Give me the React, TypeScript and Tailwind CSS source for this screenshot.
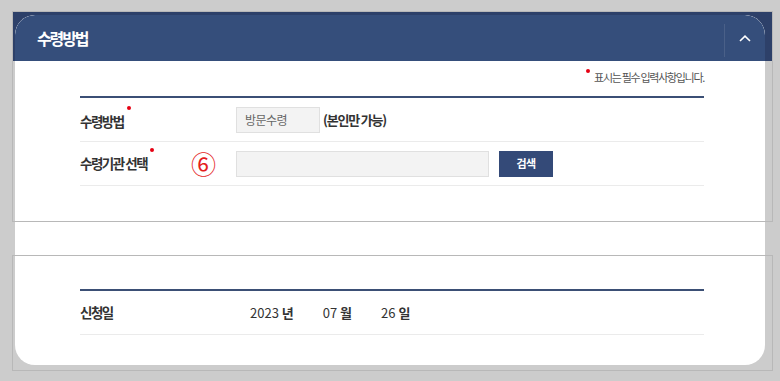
const font = { fontFamily: '"Noto Sans CJK KR", "Noto Sans", sans-serif' };

function RequiredLabel({ text }: { text: string }) {
  return (
    <span className="relative text-[13.5px] font-bold tracking-[-1.5px] text-[#333]">
      {text}
      <span className="absolute -right-[7px] -top-[5px] h-[4px] w-[4px] rounded-full bg-[#e60012]" />
    </span>
  );
}

export default function App() {
  return (
    <div className="relative h-[381px] w-[780px] overflow-hidden bg-[#cccccc]" style={font}>
      {/* header band behind the card */}
      <div className="absolute left-[12px] top-[11px] h-[50px] w-[760px] bg-[#2d4069]" />

      <div className="relative pl-[15px] pt-[15px]">
        <div className="h-[350px] w-[750px] overflow-hidden rounded-[20px] bg-white">
          <div className="flex h-[46px] items-center justify-between rounded-tl-[20px] rounded-tr-[20px] bg-[#354e7b]">
            <h2 className="pl-[22px] text-[16px] font-bold tracking-[-2.1px] text-white">수령방법</h2>
            <div className="flex h-full items-center">
              <div className="mt-[9px] h-[33px] w-px self-start bg-[#4a6088]" />
              <button className="flex h-full w-[40px] items-center justify-center">
                <svg width="12" height="7" viewBox="0 0 12 7" fill="none">
                  <path d="M1 6 L6 1.2 L11 6" stroke="#fff" strokeWidth="1.6" />
                </svg>
              </button>
            </div>
          </div>

          <div className="w-[624px] pl-[65px] box-content">
            <p className="mt-[8px] flex h-[16px] items-center justify-end text-[11px] tracking-[-1.3px] text-[#555]">
              <span className="relative">
                <span className="absolute -left-[8px] top-[0px] h-[4px] w-[4px] rounded-full bg-[#e60012]" />
                표시는 필수 입력사항입니다.
              </span>
            </p>

            <div className="mt-[11px] h-[2px] bg-[#3b4f75]" />

            <div className="flex h-[44px] items-center border-b border-[#ebebeb]">
              <div className="w-[156px]">
                <RequiredLabel text="수령방법" />
              </div>
              <div className="flex h-[26px] w-[84px] items-center border border-[#e0e0e0] bg-[#f3f3f3] pl-[8px] text-[12px] tracking-[-0.5px] text-[#666]">
                방문수령
              </div>
              <span className="ml-[3px] text-[13px] font-bold tracking-[-1.2px] text-[#333]">(본인만 가능)</span>
            </div>

            <div className="flex h-[44px] items-center border-b border-[#ebebeb]">
              <div className="flex w-[156px] items-center">
                <RequiredLabel text="수령기관 선택" />
                <span className="ml-[44px] text-[25px] leading-none text-[#e41e1e]">⑥</span>
              </div>
              <div className="h-[26px] w-[253px] border border-[#e0e0e0] bg-[#f3f3f3]" />
              <button className="ml-[10px] h-[26px] w-[54px] bg-[#344a78] text-[11px] font-bold tracking-[-0.5px] text-white">
                검색
              </button>
            </div>

            <div className="mt-[103px] h-[2px] bg-[#3b4f75]" />

            <div className="flex h-[44px] items-center border-b border-[#ebebeb] text-[13px] text-[#333]">
              <div className="w-[170px] text-[13.5px] font-bold tracking-[-1.5px]">신청일</div>
              <div className="flex items-center gap-[29px]">
                <span>
                  2023 <b className="font-bold">년</b>
                </span>
                <span>
                  07 <b className="font-bold">월</b>
                </span>
                <span>
                  26 <b className="font-bold">일</b>
                </span>
              </div>
            </div>
          </div>
        </div>
      </div>

      {/* outline boxes over the page */}
      <div className="pointer-events-none absolute left-[12px] top-[11px] h-[211px] w-[761px] border border-[#b8b8b8]" />
      <div className="pointer-events-none absolute left-[12px] top-[255px] h-[116px] w-[761px] border border-[#b8b8b8]" />
    </div>
  );
}
